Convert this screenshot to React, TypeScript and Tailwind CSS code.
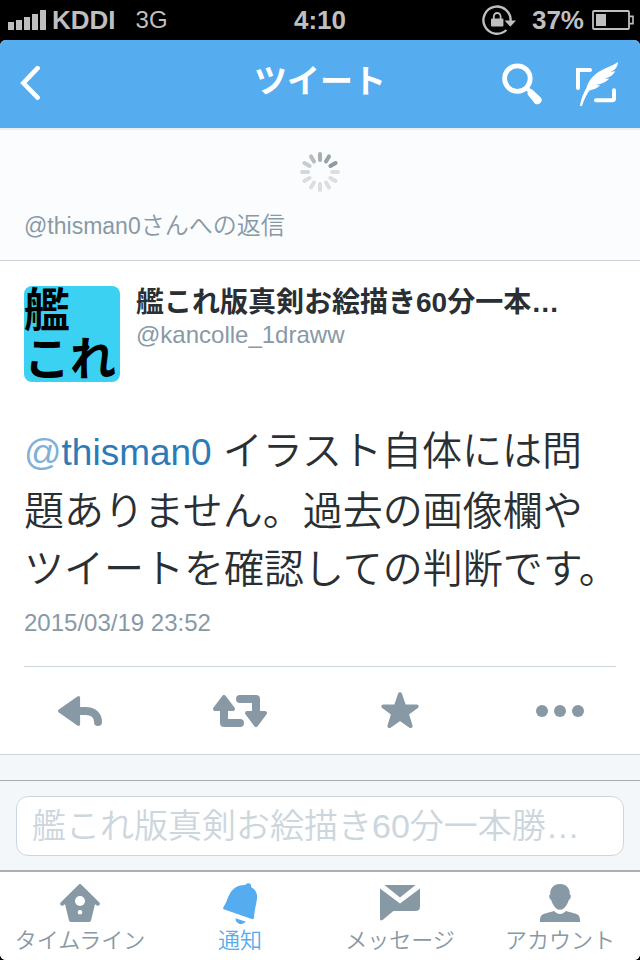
import { useState } from "react";
import type { ReactNode } from "react";

const SPOKES = [
  "#a6afb4",
  "#98a2a8",
  "#8f999f",
  "#dcdfe2",
  "#dcdfe2",
  "#dcdfe2",
  "#dcdfe2",
  "#dcdfe2",
  "#dadde0",
  "#d3d7da",
  "#c6cbcf",
  "#b6bdc2",
];

const Spinner = () => (
  <svg width="40" height="40" viewBox="0 0 40 40" role="img" aria-label="読み込み中">
    {SPOKES.map((color, i) => (
      <line
        key={i}
        x1="20"
        y1="2"
        x2="20"
        y2="8"
        stroke={color}
        strokeWidth="4"
        strokeLinecap="round"
        transform={`rotate(${i * 30} 20 20)`}
      />
    ))}
  </svg>
);

const StatusBar = () => (
  <div className="grid h-10 grid-cols-[1fr_auto_1fr] items-center px-2 text-[26px] leading-10 font-bold text-[#bfbfbf]">
    <div className="flex items-center">
      <svg width="38" height="20" viewBox="0 0 38 20" fill="currentColor" className="mr-1.5">
        <rect x="0" y="12" width="6" height="8" />
        <rect x="8" y="10" width="6" height="10" />
        <rect x="16" y="7" width="6" height="13" />
        <rect x="24" y="4" width="6" height="16" />
        <rect x="32" y="0" width="6" height="20" />
      </svg>
      <span>KDDI</span>
      <span className="ml-5 text-[24px] font-normal">3G</span>
    </div>
    <span>4:10</span>
    <div className="flex items-center justify-end">
      {/* Rotation lock */}
      <svg width="34" height="30" viewBox="0 0 34 30" className="mr-4">
        <path
          d="M28.6 16A13.6 13.6 0 1 0 24.4 25"
          fill="none"
          stroke="currentColor"
          strokeWidth="2.4"
        />
        <path d="M22.6 15.6H34L28.3 21.8z" fill="currentColor" />
        <rect x="9" y="13.4" width="12.4" height="8" rx="1" fill="currentColor" />
        <path
          d="M11.8 14V11.4a3.4 3.4 0 0 1 6.8 0V14"
          fill="none"
          stroke="currentColor"
          strokeWidth="1.8"
        />
      </svg>
      <span className="mr-2">37%</span>
      {/* Battery */}
      <svg width="42" height="20" viewBox="0 0 42 20" className="-mr-0.5">
        <rect x="1" y="1" width="36" height="18" rx="1" fill="none" stroke="currentColor" strokeWidth="1.8" />
        <rect x="4" y="4" width="10" height="12" fill="currentColor" />
        <path d="M37.5 6.4H41v7.2h-3.5" fill="none" stroke="currentColor" strokeWidth="1.6" />
      </svg>
    </div>
  </div>
);

const Header = () => (
  <header className="grid h-[88px] grid-cols-[1fr_auto_1fr] items-center bg-[#55acee] px-5 text-white">
    <button type="button" aria-label="戻る" className="w-5">
      <svg width="22" height="36" viewBox="0 0 22 36" fill="none" stroke="currentColor" strokeWidth="4.6" strokeLinecap="round">
        <path d="M17.6 2.2L3.4 17L17.6 31.6" />
      </svg>
    </button>
    <h1 className="pb-1 text-[33px] leading-10 font-bold">ツイート</h1>
    <div className="flex items-center justify-end gap-8">
      <button type="button" aria-label="検索">
        <svg width="42" height="42" viewBox="0 0 42 42" fill="none" stroke="currentColor">
          <circle cx="15.4" cy="15.6" r="12.8" strokeWidth="4.8" />
          <path d="M24.2 24.4L28.6 29" strokeWidth="4" />
          <path
            d="M29.6 26L38.8 34.4A4.3 4.3 0 0 1 32.8 40.4L25.6 31.6Q25 26.6 29.6 26z"
            fill="currentColor"
            stroke="none"
          />
        </svg>
      </button>
      <button type="button" aria-label="ツイートする">
        <svg width="44" height="46" viewBox="0 0 44 46">
          <g fill="none" stroke="currentColor" strokeWidth="4" strokeLinecap="round" strokeLinejoin="miter">
            <path d="M14 9H2V27" />
            <path d="M20 39.2H36.4Q38 39.2 38 37.4V29.2" />
          </g>
          <path
            d="M4 44.6C5 38 7.4 32 10.4 27C12.6 19.4 18 13.4 25 9.6C30 6.8 37 4.6 42 1C41.8 4 40.6 6.8 38.4 8.8L34.8 10.8L39.2 10.2C37.8 13.2 35.2 15.4 32 16.6L28.6 17.8L33.4 17.6C30.8 20.6 27.4 22.2 23.4 23.2L20.4 24L24.2 24.4C20.6 27.8 16.6 28.4 13.4 29.6C10.2 34 7.6 40 6.2 44.4Q4.8 45.8 4 44.6z"
            fill="currentColor"
          />
        </svg>
      </button>
    </div>
  </header>
);

const ACTIONS: { label: string; icon: ReactNode }[] = [
  {
    label: "返信",
    icon: (
      <svg width="44" height="30" viewBox="0 0 44 30" fill="currentColor" stroke="currentColor" strokeLinejoin="round" strokeLinecap="round">
        <path d="M1.8 15L20.4 1.8V28.2z" strokeWidth="3.4" />
        <path d="M20 15H27.5C35.4 15 40 19.2 40 26" fill="none" strokeWidth="8" />
      </svg>
    ),
  },
  {
    label: "リツイート",
    icon: (
      <svg width="54" height="32" viewBox="0 0 54 32" fill="currentColor" stroke="currentColor" strokeLinejoin="round" strokeLinecap="round">
        <path d="M11 2L20 14H2z" strokeWidth="4" />
        <path d="M11 14V28H27" fill="none" strokeWidth="8" />
        <path d="M43 30L52 18H34z" strokeWidth="4" />
        <path d="M27 4H43V18" fill="none" strokeWidth="8" />
      </svg>
    ),
  },
  {
    label: "お気に入り",
    icon: (
      <svg width="38" height="37" viewBox="0 0 38 37" fill="currentColor" stroke="currentColor" strokeWidth="4" strokeLinejoin="round">
        <path d="M19 2.2L23.2 14.4H35.6L25.8 21.6L29.6 34L19 26.6L8.4 34L12.2 21.6L2.4 14.4H14.8z" />
      </svg>
    ),
  },
  {
    label: "その他",
    icon: (
      <svg width="48" height="12" viewBox="0 0 48 12" fill="currentColor">
        <circle cx="6" cy="6" r="6" />
        <circle cx="24" cy="6" r="6" />
        <circle cx="42" cy="6" r="6" />
      </svg>
    ),
  },
];

const Tweet = () => (
  <article className="border-b border-[#ccd6dd] bg-white">
    <div className="flex gap-4 px-6 pt-[25px]">
      <div className="h-24 w-24 shrink-0 rounded-lg bg-[#3bd1f3] text-[46px] leading-[49px] font-bold whitespace-nowrap text-black">
        <div>艦</div>
        <div>これ</div>
      </div>
      <div className="min-w-0">
        <h2 className="truncate text-[28px] leading-[34px] font-bold text-[#292f33]">
          艦これ版真剣お絵描き60分一本…
        </h2>
        <p className="text-[24px] leading-[30px] text-[#8899a6]">@kancolle_1draww</p>
      </div>
    </div>

    <p className="mt-10 pr-4 pl-6 text-[40px] leading-[58px] font-[350] text-[#292f33]">
      <a href="#thisman0" className="text-[37px] text-[#2b7bb9]">
        <span className="text-[#7fb0d8]">@</span>thisman0
      </a>{" "}
      イラスト自体には問
      <br />
      題ありません。過去の画像欄や
      <br />
      ツイートを確認しての判断です。
    </p>
    <time dateTime="2015-03-19T23:52" className="mt-2 block px-6 text-[24px] leading-[34px] text-[#8899a6]">
      2015/03/19 23:52
    </time>

    <div className="mx-6 mt-[26px] border-t border-[#ccd6dd]"></div>
    <div className="grid h-[87px] grid-cols-4 text-[#8899a6]">
      {ACTIONS.map(({ label, icon }) => (
        <button key={label} type="button" aria-label={label} className="flex items-center justify-center">
          {icon}
        </button>
      ))}
    </div>
  </article>
);

const TABS: { label: string; icon: ReactNode }[] = [
  {
    label: "タイムライン",
    icon: (
      <svg width="40" height="38" viewBox="0 0 40 38" fill="currentColor">
        <path
          fillRule="evenodd"
          d="M18.6.8Q20-.6 21.4.8L39.4 18.4Q40.4 19.8 39.4 21Q38.4 22.2 36.8 21.4L35 20.2L31 36.6Q30.6 38 29.2 38H10.8Q9.4 38 9 36.6L5 20.2L3.2 21.4Q1.6 22.2.6 21Q-.4 19.8.6 18.4zM20 12a5 5 0 1 0 0 10a5 5 0 1 0 0-10zM20 26a2.3 2.3 0 1 0 0 4.6a2.3 2.3 0 1 0 0-4.6z"
        />
      </svg>
    ),
  },
  {
    label: "通知",
    icon: (
      <svg width="34" height="41" viewBox="0 0 34 41" fill="currentColor">
        <path d="M22.2 2.2C22.8.4 24.4-.2 26 .3C27.6.8 28.4 2.2 28 4C32.4 6.4 34.6 10.6 34 15.6C33.4 21.4 31.4 27 31 34.6Q30.6 36.6 28.8 36L1.4 26.6Q-.6 25.8.4 24.2C4.4 18.6 4.4 13.4 8.6 8C12 3.8 17.2 1.6 22.2 2.2z" />
        <path d="M12.6 35.2L22.8 38.8C20.6 41 18 41.4 15.6 40.4C13.4 39.4 12.4 37.6 12.6 35.2z" />
      </svg>
    ),
  },
  {
    label: "メッセージ",
    icon: (
      <svg width="40" height="36" viewBox="0 0 40 36" fill="currentColor">
        <path d="M4.4 0H35.6L20 12.6z" />
        <path d="M0 3.4L20 18.4L40 3.4V21.4Q40 26 35.4 26H13.4L2.6 35Q0 36.4 0 33.6z" />
      </svg>
    ),
  },
  {
    label: "アカウント",
    icon: (
      <svg width="40" height="38" viewBox="0 0 40 38" fill="currentColor">
        <path d="M20 0C26.6 0 30 4.4 29.8 10.2Q31.2 10.6 30.8 13Q30.4 15.4 28.8 16C27.4 20.6 24.4 25.8 20 25.8C15.6 25.8 12.6 20.6 11.2 16Q9.6 15.4 9.2 13Q8.8 10.6 10.2 10.2C10 4.4 13.4 0 20 0z" />
        <path d="M14.2 27C17.6 31 22.4 31 25.8 27L35 29.4C38.6 30.4 40 32.4 40 36V38H0V36C0 32.4 1.4 30.4 5 29.4z" />
      </svg>
    ),
  },
];

const TabBar = () => {
  const [active, setActive] = useState("通知");

  return (
    <nav className="grid grid-cols-4 border-t-2 border-[#aab0b5] bg-white">
      {TABS.map(({ label, icon }) => (
        <button
          key={label}
          type="button"
          onClick={() => setActive(label)}
          className={
            "flex h-[88px] flex-col items-center pt-[9px] text-[22px] leading-8 font-[350] whitespace-nowrap " +
            (active === label ? "text-[#55acee]" : "text-[#8899a6]")
          }
        >
          <span className="flex h-11 items-center">{icon}</span>
          <span>{label}</span>
        </button>
      ))}
    </nav>
  );
};

export default function App() {
  return (
    <div className="min-h-screen bg-black font-['Liberation_Sans','Noto_Sans_CJK_JP',sans-serif]" lang="ja">
      <StatusBar />
      <div className="flex min-h-[calc(100vh-40px)] flex-col overflow-hidden rounded-md bg-[#f3f7fa]">
        <Header />
        <main className="flex-1">
          <section className="border-t-2 border-b border-t-[#e8eef3] border-b-[#ccd0d4] bg-[#fbfcfe] px-6 pt-[22px] pb-[18px]">
            <div className="flex justify-center">
              <Spinner />
            </div>
            <p className="mt-[18px] text-[24px] leading-8 font-[350] text-[#8899a6]">
              <span className="text-[23px]">@thisman0</span>さんへの返信
            </p>
          </section>
          <Tweet />
        </main>
        <form className="border-t border-[#a4abb1] px-4 pt-[15px] pb-[14px]" onSubmit={(e) => e.preventDefault()}>
          <input
            type="text"
            aria-label="返信を入力"
            placeholder="艦これ版真剣お絵描き60分一本勝…"
            className="block h-[60px] w-full rounded-xl border border-[#ccd6dd] bg-white px-[15px] text-[34px] font-[350] text-[#292f33] outline-none placeholder:text-[#ccd6dd]"
          />
        </form>
        <TabBar />
      </div>
    </div>
  );
}
